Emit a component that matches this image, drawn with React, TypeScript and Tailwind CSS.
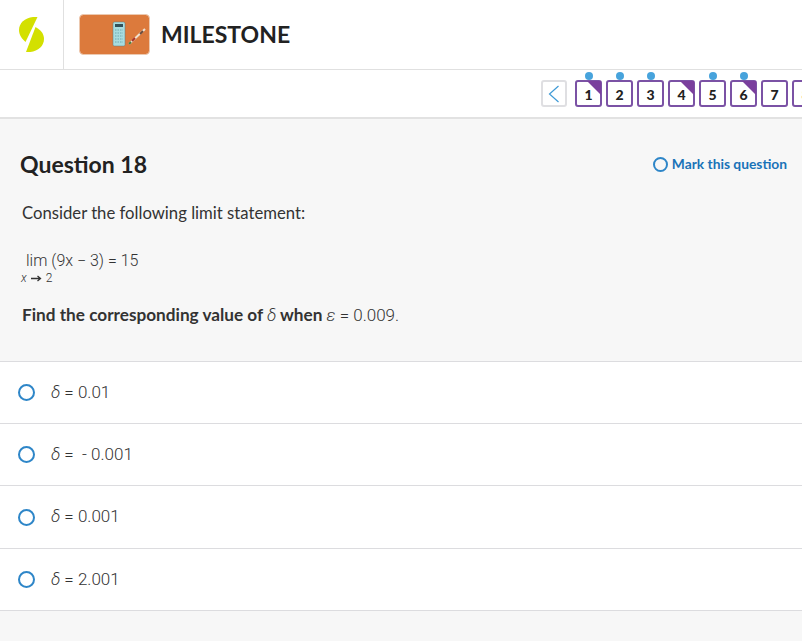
import React from "react";

const sans = "font-['Lato','Liberation_Sans',sans-serif]";
const math = "font-['Roboto','Liberation_Sans',sans-serif] font-light";

function Delta() {
  return <span className="italic">δ</span>;
}

function Nav({ n, dot, flag }: { n: number; dot?: boolean; flag?: boolean }) {
  return (
    <div className="relative h-[27px] w-[27px] shrink-0 rounded-[3px] border-2 border-[#7b52a5] bg-white">
      {dot && <span className="absolute left-[8px] top-[-10px] h-2 w-2 rounded-full bg-[#47a3dc]" />}
      {flag && (
        <svg className="absolute right-[-1px] top-[-1px]" width="14" height="14" viewBox="0 0 14 14">
          <path d="M0 0H14V14Z" fill="#7a3f9d" />
        </svg>
      )}
      <span className="relative flex h-full items-center justify-center pt-px text-[14px] font-black text-[#222]">{n}</span>
    </div>
  );
}

function Option({ children, tall }: { children: React.ReactNode; tall?: boolean }) {
  return (
    <div className={`flex items-center border-b border-[#dcdcdf] bg-white pl-[18px] ${tall ? "h-[63px]" : "h-[62px]"}`}>
      <span className="h-[17px] w-[17px] shrink-0 rounded-full border-2 border-[#2e86c8]" />
      <span className={`ml-[16px] flex items-center whitespace-pre text-[17px] text-[#333] ${math}`}>{children}</span>
    </div>
  );
}

export default function App() {
  return (
    <div className={`h-[641px] w-[802px] overflow-hidden bg-[#f7f7f7] ${sans}`}>
      <header className="flex h-[70px] items-stretch border-b border-[#e0e0e0] bg-white">
        <div className="flex w-[64px] shrink-0 items-center justify-center border-r border-[#e0e0e0]">
          <svg className="mr-[1px]" width="25" height="35" viewBox="0 0 25 35">
            <path d="M18.5 0 C8 -1 0 5 0 13 C0 18 3 22 6.5 25 Z" fill="#d3e000" />
            <path d="M7 35 C17 36 25 30 25 22 C25 17 22 13 16.5 10 Z" fill="#d3e000" />
          </svg>
        </div>
        <div className="flex items-center pl-[15px]">
          <svg width="71" height="41" viewBox="0 0 71 41">
            <rect x="0.5" y="0.5" width="70" height="40" rx="4" fill="#dc7a3c" stroke="#ecc9b0" />
            <rect x="34" y="8" width="12" height="24" rx="1.5" fill="#a8dde0" stroke="#5d7a7c" strokeWidth="0.5" />
            <rect x="36" y="10" width="8" height="3" fill="#33525a" />
            <path d="M36 16H44M36 19H44M36 22H44M36 25H44M36 28H44" stroke="#6fa9b0" strokeWidth="1" strokeDasharray="1.5 1" />
            <path d="M50 30 L66 15" stroke="#f0e2d0" strokeWidth="2" />
            <path d="M53 27 L56 24" stroke="#a8322a" strokeWidth="2" />
            <path d="M50 30 L52 28" stroke="#4c7a3a" strokeWidth="2" />
            <path d="M61 20 L64 17" stroke="#6b4a3a" strokeWidth="2" />
          </svg>
          <span className="ml-[11px] text-[23px] font-bold leading-none text-[#222]">MILESTONE</span>
        </div>
      </header>

      <nav className="flex h-[49px] items-start gap-[4px] overflow-hidden border-b-2 border-[#e2e2e2] bg-white pl-[541px] pt-[10px]">
        <div className="mr-[4px] flex h-[27px] w-[26px] shrink-0 items-center justify-center rounded-[3px] border-2 border-[#dfdfe2]">
          <svg width="12" height="18" viewBox="0 0 12 18" fill="none" stroke="#3f9ad6" strokeWidth="1.2">
            <path d="M10.5 1 L1.5 9 L10.5 17" />
          </svg>
        </div>
        <Nav n={1} dot flag />
        <Nav n={2} dot />
        <Nav n={3} dot />
        <Nav n={4} flag />
        <Nav n={5} dot />
        <Nav n={6} dot flag />
        <Nav n={7} />
        <Nav n={8} />
      </nav>

      <section className="h-[243px] border-b border-[#dcdcdf] pl-[20px] pr-[15px]">
        <div className="flex items-center justify-between pt-[30px]">
          <h1 className="text-[23px] font-bold leading-[30px] text-[#222]">Question 18</h1>
          <span className="flex items-center gap-[4px] text-[13.8px] font-bold text-[#1a73b8]">
            <span className="h-[15px] w-[15px] rounded-full border-2 border-[#2e86c8]" />
            Mark this question
          </span>
        </div>
        <p className="ml-[2px] mt-[24px] text-[16.7px] leading-5 text-[#333]">Consider the following limit statement:</p>
        <div className={`mt-[29px] text-[#333] ${math}`}>
          <div className="ml-[6px] text-[16px] leading-[18px]">lim (9x − 3) = 15</div>
          <div className="ml-[1px] mt-[1px] flex items-center gap-[4px] text-[12px] leading-[14px]">
            <i>x</i>
            <svg width="11" height="7" viewBox="0 0 11 7" fill="none" stroke="#333" strokeWidth="1.3">
              <path d="M0 3.5H9M6.5 1 L9.5 3.5 L6.5 6" />
            </svg>
            <span>2</span>
          </div>
        </div>
        <p className="ml-[2px] mt-[20px] flex items-center whitespace-pre text-[17.2px] font-bold leading-5 text-[#333]">
          Find the corresponding value of <span className={`text-[17px] ${math}`}><Delta /></span> when <span className={`text-[17px] text-[#333] ${math}`}><i>ε</i> = 0.009.</span>
        </p>
      </section>

      <Option><Delta /> = 0.01</Option>
      <Option><Delta /> =  - 0.001</Option>
      <Option tall><Delta /> = 0.001</Option>
      <Option><Delta /> = 2.001</Option>
    </div>
  );
}
